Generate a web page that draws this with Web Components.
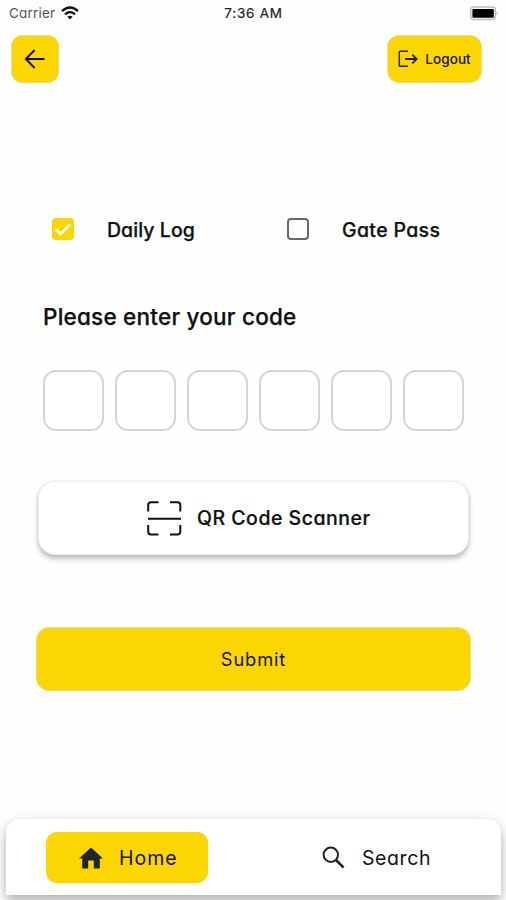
<!DOCTYPE html>
<html lang="en">
<head>
<meta charset="utf-8">
<title>Gate access</title>
<style>
  html, body { margin: 0; height: 100%; background: #fefefe; }
  body { overflow: hidden; font-family: Inter, "Liberation Sans", sans-serif; font-feature-settings: "cv11" 1; color: #111; }
</style>
</head>
<body>
<access-screen></access-screen>
<script>
const YELLOW = '#fcd600';
function define(name, html) {
  const t = document.createElement('template');
  t.innerHTML = html;
  customElements.define(name, class extends HTMLElement {
    constructor() {
      super();
      this.attachShadow({ mode: 'open' }).append(t.content.cloneNode(true));
    }
  });
}

define('status-bar', `
<style>
  :host { display: grid; grid-template-columns: 1fr auto 1fr; align-items: center; height: 26px; padding: 0 8px 0 9px; font-size: 13.5px; box-sizing: border-box; }
  .left { display: flex; align-items: center; gap: 6px; color: #555; letter-spacing: .2px; }
  .right { display: flex; justify-content: flex-end; }
  .time { letter-spacing: .75px; color: #222; -webkit-text-stroke: .2px #222; }
  svg { display: block; }
</style>
<div class="left"><span>Carrier</span>
<svg width="18" height="14" viewBox="0 0 18 14" fill="none" stroke="#111" stroke-width="2.3"><path d="M1 5.1Q9-2 17 5.1M4 8.3Q9 4 14 8.3"/><path d="M6.4 10.8Q9 8.8 11.6 10.8L9 13.5Z" fill="#111" stroke="none"/></svg></div>
<span class="time">7:36 AM</span>
<div class="right"><svg width="30" height="15" viewBox="0 0 30 15"><rect x="2.7" y="1" width="24.6" height="12.6" rx="3" fill="#fff" stroke="#bdbdbd" stroke-width="1.5"/><rect x="4.4" y="2.9" width="21.4" height="8.8" rx=".8" fill="#000"/><path d="M28.6 5.2Q30.2 7.3 28.6 9.4Z" fill="#999"/></svg></div>`);

define('yellow-button', `
<style>
  :host { display: flex; align-items: center; justify-content: center; box-sizing: border-box; background: ${YELLOW}; border: 1px solid #ead98a; border-radius: 11px; }
</style><slot></slot>`);

define('check-option', `
<style>
  :host { display: flex; align-items: center; gap: 33px; height: 30px; font-size: 19.5px; font-weight: 500; white-space: nowrap; -webkit-text-stroke: .25px #111; }
  .box { box-sizing: border-box; width: 22px; height: 22px; border: 2px solid #666; border-radius: 4px; display: grid; place-items: center; }
  .label { padding-top: 2px; }
  svg { display: none; }
  :host([checked]) .box { background: ${YELLOW}; border-color: ${YELLOW}; }
  :host([checked]) svg { display: block; }
</style>
<span class="box"><svg width="18" height="16" viewBox="0 0 18 16" fill="none" stroke="#fff" stroke-width="2.5"><path d="M1.8 8.2 6.6 13 16.3 3.2"/></svg></span><span class="label"><slot></slot></span>`);

define('code-input', `
<style>
  :host { display: flex; gap: 11px; }
  i { box-sizing: border-box; width: 61px; height: 61px; border: 2px solid #d5d5d5; border-radius: 13px; background: #fff; }
</style><i></i><i></i><i></i><i></i><i></i><i></i>`);

define('scan-button', `
<style>
  :host { display: flex; align-items: center; gap: 15px; box-sizing: border-box; height: 74px; padding-left: 108px; background: #fff; border: 1px solid #eee; border-radius: 17px; box-shadow: 0 4px 5px rgba(0,0,0,.24), 0 0 3px rgba(0,0,0,.09); font-size: 19.5px; font-weight: 500; white-space: nowrap; -webkit-text-stroke: .2px #111; }
  svg { display: block; }
</style>
<svg width="35" height="35" viewBox="0 0 35 35" fill="none" stroke="#111" stroke-width="2"><path d="M1.2 10.5V4Q1.2 1.2 4 1.2H11.5M23 1.2H30.5Q33.3 1.2 33.3 4V10.5M1.2 24V30.8Q1.2 33.5 4 33.5H11.5M23 33.5H30.5Q33.3 33.5 33.3 30.8V24M1 17.8H34"/></svg>
<slot></slot>`);

define('tab-item', `
<style>
  :host { display: flex; align-items: center; box-sizing: border-box; height: 51px; border-radius: 11px; font-size: 19.5px; }
  :host([active]) { background: ${YELLOW}; }
  .label { padding-top: 1px; }
</style><slot name="icon"></slot><span class="label"><slot></slot></span>`);

define('tab-bar', `
<style>
  :host { display: flex; box-sizing: border-box; height: 76px; margin: 0 5px 0 6px; padding: 13px 0 0 40px; background: #fff; border-radius: 14px 14px 0 0; box-shadow: 0 6px 11px rgba(0,0,0,.28), 0 0 12px rgba(0,0,0,.06); }
</style><slot></slot>`);

define('access-screen', `
<style>
  :host { display: flex; flex-direction: column; width: 506px; height: 900px; overflow: hidden; background: #fefefe; }
  svg { display: block; }
  header { display: flex; justify-content: space-between; padding: 9px 24px 0 11px; }
  .back { width: 48px; height: 48px; }
  .logout { width: 95px; height: 48px; border-radius: 12px; gap: 7px; font-size: 13.5px; font-weight: 500; letter-spacing: .1px; }
  .options { display: grid; grid-template-columns: 235px auto; justify-content: start; padding: 131px 0 0 52px; }
  .daily { letter-spacing: .05px; }
  .gate { letter-spacing: .35px; }
  h1 { margin: 58px 0 0 43px; font-size: 22.5px; line-height: 30px; font-weight: 500; letter-spacing: .22px; -webkit-text-stroke: .25px #111; }
  code-input { margin: 38px 0 0 43px; }
  scan-button { margin: 50px 37px 0 38px; letter-spacing: .5px; }
  .submit { margin: 72px 35px 0 36px; height: 64px; border-radius: 13px; font-size: 18.3px; letter-spacing: .85px; }
  tab-bar { margin-top: 128px; letter-spacing: .6px; }
  .home { width: 162px; padding-left: 32px; gap: 15px; letter-spacing: 1px; }
  .search { margin-left: 69px; padding-left: 45px; gap: 17px; }
</style>
<status-bar></status-bar>
<header>
  <yellow-button class="back"><svg width="22" height="22" viewBox="0 0 22 22" fill="none" stroke="#111" stroke-width="1.9"><path d="M20.5 11H2.2M10.6 2 1.8 11 10.6 20"/></svg></yellow-button>
  <yellow-button class="logout"><svg width="20" height="18" viewBox="0 0 20 18" fill="none" stroke="#222" stroke-width="1.5"><path d="M10 1.2H2.2Q1.3 1.2 1.3 2.1V15.4Q1.3 16.3 2.2 16.3H10"/><path stroke-width="1.8" d="M7 9H18.5M14.3 4.7 18.6 9 14.3 13.3"/></svg><span>Logout</span></yellow-button>
</header>
<div class="options">
  <check-option checked class="daily">Daily Log</check-option>
  <check-option class="gate">Gate Pass</check-option>
</div>
<h1>Please enter your code</h1>
<code-input></code-input>
<scan-button>QR Code Scanner</scan-button>
<yellow-button class="submit">Submit</yellow-button>
<tab-bar>
  <tab-item active class="home"><svg slot="icon" width="26" height="24" viewBox="0 0 26 24"><path fill="#20242c" d="M13 1.5 25 12.5H21.8V22.5H15.8V14.5H10.2V22.5H4.2V12.5H1Z"/></svg>Home</tab-item>
  <tab-item class="search"><svg slot="icon" width="23" height="23" viewBox="0 0 23 23" fill="none" stroke="#222" stroke-width="2"><circle cx="8.8" cy="8.8" r="7.2"/><path stroke-width="2.6" d="M14 14 21.6 21.6"/></svg>Search</tab-item>
</tab-bar>`);
</script>
</body>
</html>
